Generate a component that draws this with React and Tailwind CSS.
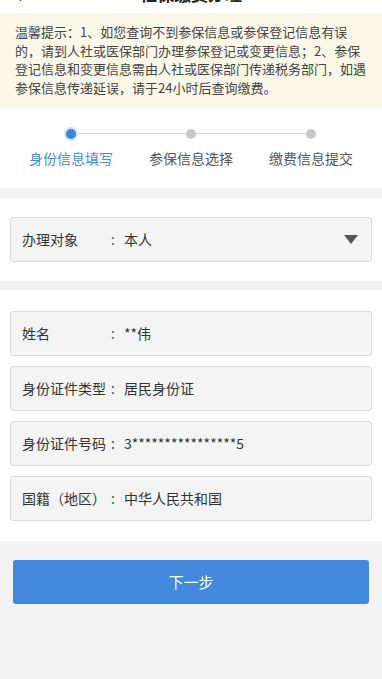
const FONT = { fontFamily: '"Noto Sans CJK SC", "Liberation Sans", sans-serif' };

const steps = ["身份信息填写", "参保信息选择", "缴费信息提交"];

const fields = [
  { label: "姓名", value: "**伟" },
  { label: "身份证件类型", value: "居民身份证" },
  { label: "身份证件号码", value: "3****************5" },
  { label: "国籍（地区）", value: "中华人民共和国" },
];

function Row({ label, value, arrow }) {
  return (
    <div className="flex items-center h-[45px] mx-[10px] px-[11px] bg-[#f4f4f4] border border-[#dcdcdc] rounded-[3px] text-[14px] text-[#333] whitespace-nowrap">
      <span className="w-[89px] shrink-0">{label}</span>
      <span className="text-[#555] mr-[9px]">:</span>
      <span className="flex-1">{value}</span>
      {arrow && (
        <svg width="14" height="9" viewBox="0 0 14 9" className="mr-[2px]">
          <path d="M0 0 L14 0 L7 9 Z" fill="#555" />
        </svg>
      )}
    </div>
  );
}

export default function App() {
  return (
    <div className="w-[382px] h-[679px] overflow-hidden bg-[#f2f2f2]" style={FONT}>
      {/* header, mostly scrolled out of view */}
      <div className="h-[44px] -mt-[31px] bg-white flex items-end pb-[11px] px-[16px] whitespace-nowrap">
        <span className="w-[40px] text-[22px] leading-[17px] text-[#333]">‹</span>
        <span className="flex-1 text-center font-bold text-[17px] leading-[17px] text-[#222]">社保缴费办理</span>
        <span className="w-[40px]" />
      </div>

      {/* notice */}
      <div className="bg-[#fcf8e8] h-[95px] px-[15px] pt-[10px] text-[13px] leading-[18.5px] text-[#444]">
        温馨提示：1、如您查询不到参保信息或参保登记信息有误的，请到人社或医保部门办理参保登记或变更信息；2、参保登记信息和变更信息需由人社或医保部门传递税务部门，如遇参保信息传递延误，请于24小时后查询缴费。
      </div>

      {/* steps */}
      <div className="bg-white h-[80px] pt-[19px] pl-[11px]">
        <div className="relative flex">
          <div className="absolute top-[6px] left-[60px] w-[239px] h-px bg-[#d6d6d6]" />
          {steps.map((s, i) => (
            <div key={s} className="relative w-[120px] flex flex-col items-center gap-[10px]">
              <div className="h-[14px] flex items-center justify-center">
                {i === 0 ? (
                  <div className="w-[14px] h-[14px] rounded-full bg-[#cfe2f8] flex items-center justify-center">
                    <div className="w-[10px] h-[10px] rounded-full bg-[#3b86dd]" />
                  </div>
                ) : (
                  <div className="w-[10px] h-[10px] rounded-full bg-[#c8c8c8]" />
                )}
              </div>
              <span className={`text-[14px] leading-none ${i === 0 ? "text-[#4a8bd4]" : "text-[#555]"}`}>
                {s}
              </span>
            </div>
          ))}
        </div>
      </div>

      {/* select */}
      <div className="bg-white mt-[10px] py-[19px]">
        <Row label="办理对象" value="本人" arrow />
      </div>

      {/* info */}
      <div className="bg-white mt-[9px] pt-[21px] pb-[20px] flex flex-col gap-[10px]">
        {fields.map((f) => (
          <Row key={f.label} label={f.label} value={f.value} />
        ))}
      </div>

      {/* button */}
      <div className="px-[13px] pt-[19px]">
        <button className="w-full h-[44px] rounded-[3px] bg-[#4189df] text-white text-[15px]">
          下一步
        </button>
      </div>
    </div>
  );
}
